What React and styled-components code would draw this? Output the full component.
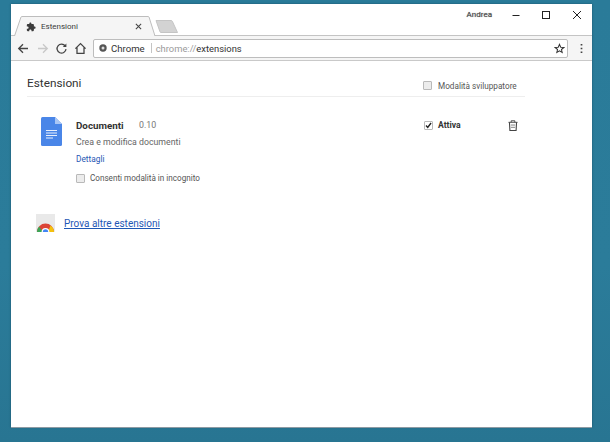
import React from "react";
import styled, { createGlobalStyle } from "styled-components";

const Global = createGlobalStyle`
  html, body { margin: 0; padding: 0; width: 610px; height: 442px; overflow: hidden; }
  body { background: linear-gradient(180deg, #2a7b99 0%, #2b7c9a 60%, #287592 100%); font-family: Roboto, "Open Sans", sans-serif; }
`;

const Desktop = styled.div`
  width: 610px;
  height: 442px;
  padding: 4px 18px 15px 11px;
  box-sizing: border-box;
  display: flex;
`;
const Win = styled.div`
  flex: 1;
  background: #fff;
  display: flex;
  flex-direction: column;
  box-shadow: 0 1px 0 #8d9aa3, 0 0 2px rgba(20, 50, 70, 0.55);
`;
const Strip = styled.div`
  height: 32px;
  display: flex;
  align-items: flex-end;
  position: relative;
  padding-left: 3px;
  border-bottom: 1px solid #c4c4c4;
  box-sizing: border-box;
`;
const Tab = styled.div`
  position: relative;
  width: 142px;
  height: 20px;
  margin-bottom: -1px;
  display: flex;
  align-items: center;
  padding: 1px 14px 0 12px;
  box-sizing: border-box;
  font-size: 8px;
  color: #3a3a3a;
  gap: 5px;
  z-index: 1;
`;
const TabShape = styled.svg`
  position: absolute;
  inset: 0;
`;
const TabIcon = styled.svg`
  position: relative;
  flex: none;
`;
const TabTitle = styled.span`
  flex: 1;
  position: relative;
`;
const NewTab = styled.svg`
  margin: 0 0 2px -1px;
`;
const Caption = styled.div`
  position: absolute;
  right: 0;
  top: 0;
  height: 20px;
  display: flex;
  align-items: center;
`;
const User = styled.span`
  font-size: 8px;
  color: #444;
  margin-right: 7px;
  text-shadow: 0 0 1px #888;
`;
const CaptionBtn = styled.svg`
  width: 31px;
  height: 20px;
`;
const Toolbar = styled.div`
  height: 25px;
  background: #f5f5f5;
  border-bottom: 1px solid #c9c9c9;
  display: flex;
  align-items: center;
  padding-left: 3px;
  box-sizing: border-box;
`;
const NavIcon = styled.svg`
  width: 19px;
  height: 19px;
  flex: none;
`;
const Omni = styled.div`
  width: 475px;
  height: 19px;
  margin-left: 3px;
  background: #fff;
  border: 1px solid #bdbdbd;
  border-radius: 2px;
  box-sizing: border-box;
  display: flex;
  align-items: center;
  padding: 0 2px 0 5px;
  font-size: 9.6px;
  color: #333;
`;
const OmniIcon = styled.svg`
  margin-right: 4px;
  flex: none;
`;
const Sep = styled.span`
  width: 1px;
  height: 10px;
  background: #c4c4c4;
  margin: 0 4px 0 6px;
`;
const Scheme = styled.span`
  color: #9a9a9a;
`;
const Url = styled.span`
  flex: 1;
  font-size: 9.4px;
`;
const MenuIcon = styled(NavIcon)`
  margin-left: 4px;
`;
const Main = styled.div`
  width: 498px;
  margin-left: 16px;
  display: flex;
  flex-direction: column;
`;
const Header = styled.div`
  height: 36px;
  display: flex;
  align-items: center;
  justify-content: space-between;
  border-bottom: 1px solid #eeeeee;
  box-sizing: border-box;
`;
const Title = styled.h1`
  margin: 8px 0 0;
  font-size: 11.8px;
  font-weight: 400;
  color: #333;
`;
const DevMode = styled.label`
  display: flex;
  align-items: center;
  gap: 6px;
  font-size: 8.2px;
  color: #555;
  width: 102px;
  margin-top: 14px;
  white-space: nowrap;
`;
const Box = styled.span`
  width: 9px;
  height: 9px;
  box-sizing: border-box;
  flex: none;
  border: 1px solid #b9b9b9;
  background: ${p => (p.$checked ? "#fff" : "#ececec")};
  border-radius: 1px;
  display: flex;
  align-items: center;
  justify-content: center;
`;
const ExtRow = styled.div`
  display: flex;
  padding: 20px 0 0 14px;
`;
const DocIcon = styled.svg`
  width: 21px;
  height: 29px;
  flex: none;
  margin-right: 14px;
`;
const ExtBody = styled.div`
  flex: 1;
  display: flex;
  flex-direction: column;
  padding-top: 1px;
`;
const NameLine = styled.div`
  display: flex;
  height: 14px;
  align-items: center;
  font-size: 9.8px;
  color: #333;
`;
const Name = styled.span`
  font-weight: 700;
  width: 63px;
`;
const Version = styled.span`
  color: #777;
  font-size: 8.8px;
`;
const Desc = styled.div`
  margin-top: 3px;
  height: 14px;
  line-height: 14px;
  font-size: 8.75px;
  color: #666;
`;
const Details = styled.a`
  margin-top: 3px;
  height: 14px;
  line-height: 14px;
  font-size: 8.3px;
  color: #1f57b5;
`;
const Incognito = styled.label`
  margin-top: 7px;
  display: flex;
  align-items: center;
  gap: 5px;
  font-size: 8.15px;
  color: #555;
`;
const Controls = styled.div`
  width: 101px;
  display: flex;
  align-items: center;
  height: 14px;
  margin-top: 1px;
`;
const Active = styled.label`
  display: flex;
  align-items: center;
  gap: 5px;
  flex: 1;
  font-size: 8.6px;
  font-weight: 700;
  color: #333;
`;
const Trash = styled.svg`
  width: 10px;
  height: 11px;
  margin: 0 7px 0 0;
`;
const MoreRow = styled.div`
  display: flex;
  align-items: center;
  gap: 9px;
  margin: 31px 0 0 9px;
`;
const ChromeLogo = styled.svg`
  flex: none;
`;
const MoreLink = styled.a`
  font-size: 10px;
  color: #1f57b5;
  text-decoration: underline;
`;

const Check = () => (
  <svg width="9" height="9" viewBox="0 0 9 9">
    <path d="M1.3 4.6 L3.5 7 L7.8 1.3" fill="none" stroke="#222" strokeWidth="1.8" />
  </svg>
);

export default function App() {
  return (
    <>
      <Global />
      <Desktop>
        <Win>
          <Strip>
            <Tab>
              <TabShape width="142" height="20" viewBox="0 0 142 20">
                <path d="M0.5 20 L7 1 Q7.3 0.5 8 0.5 L134 0.5 Q134.8 0.5 135 1 L141 20" fill="#f5f5f5" stroke="#bdbdbd" />
              </TabShape>
              <TabIcon width="10" height="10" viewBox="0 0 24 24">
                <path d="M20.5 11H19V7c0-1.1-.9-2-2-2h-4V3.5C13 2.12 11.88 1 10.5 1S8 2.12 8 3.5V5H4c-1.1 0-2 .9-2 2v3.8h1.5c1.49 0 2.7 1.21 2.7 2.7S4.99 16.2 3.5 16.2H2V20c0 1.1.9 2 2 2h3.8v-1.5c0-1.49 1.21-2.7 2.7-2.7s2.7 1.21 2.7 2.7V22H17c1.1 0 2-.9 2-2v-4h1.5c1.38 0 2.5-1.12 2.5-2.5S21.88 11 20.5 11z" fill="#3c3c3c" />
              </TabIcon>
              <TabTitle>Estensioni</TabTitle>
              <TabIcon width="7" height="7" viewBox="0 0 8 8">
                <path d="M1 1 L7 7 M7 1 L1 7" stroke="#444" strokeWidth="1.2" />
              </TabIcon>
            </Tab>
            <NewTab width="24" height="13" viewBox="0 0 24 13">
              <path d="M1 0.5 L16 0.5 Q17 0.5 17.3 1.2 L22.5 12.5 L6 12.5 Q5.2 12.5 5 11.8 Z" fill="#d3d3d3" stroke="#c4c4c4" />
            </NewTab>
            <Caption>
              <User>Andrea</User>
              <CaptionBtn viewBox="0 0 31 20">
                <path d="M13.5 11.5 H20.5" stroke="#222" strokeWidth="1" />
              </CaptionBtn>
              <CaptionBtn viewBox="0 0 31 20">
                <rect x="12.5" y="7.5" width="7" height="7" fill="none" stroke="#222" />
              </CaptionBtn>
              <CaptionBtn viewBox="0 0 31 20">
                <path d="M12 7 L20 15 M20 7 L12 15" stroke="#222" strokeWidth="1" />
              </CaptionBtn>
            </Caption>
          </Strip>
          <Toolbar>
            <NavIcon viewBox="0 0 19 19">
              <path d="M14 9.5 H5 M9 5.2 L4.7 9.5 L9 13.8" fill="none" stroke="#444" strokeWidth="1.3" />
            </NavIcon>
            <NavIcon viewBox="0 0 19 19">
              <path d="M5 9.5 H14 M10 5.2 L14.3 9.5 L10 13.8" fill="none" stroke="#c8c8c8" strokeWidth="1.3" />
            </NavIcon>
            <NavIcon viewBox="0 0 19 19">
              <path d="M13.2 7 A4.5 4.5 0 1 0 14 10.2" fill="none" stroke="#444" strokeWidth="1.3" />
              <path d="M14.4 4.4 V8 H10.8 Z" fill="#444" />
            </NavIcon>
            <NavIcon viewBox="0 0 19 19">
              <path d="M4.4 9.6 L9.5 4.6 L14.6 9.6 M6 8.4 V14.4 H13 V8.4" fill="none" stroke="#444" strokeWidth="1.3" />
            </NavIcon>
            <Omni>
              <OmniIcon width="8" height="8" viewBox="0 0 8 8">
                <circle cx="4" cy="4" r="3.7" fill="#555" />
                <circle cx="4" cy="4" r="1.5" fill="#ddd" />
              </OmniIcon>
              Chrome
              <Sep />
              <Url><Scheme>chrome://</Scheme>extensions</Url>
              <svg width="11" height="11" viewBox="0 0 24 24">
                <path d="M12 3 L14.7 9.2 L21.4 9.8 L16.3 14.2 L17.9 20.8 L12 17.3 L6.1 20.8 L7.7 14.2 L2.6 9.8 L9.3 9.2 Z" fill="none" stroke="#333" strokeWidth="2.2" />
              </svg>
            </Omni>
            <MenuIcon viewBox="0 0 19 19">
              <path d="M9.5 5 V6.6 M9.5 8.7 V10.3 M9.5 12.4 V14" stroke="#444" strokeWidth="1.7" />
            </MenuIcon>
          </Toolbar>
          <Main>
            <Header>
              <Title>Estensioni</Title>
              <DevMode><Box />Modalità sviluppatore</DevMode>
            </Header>
            <ExtRow>
              <DocIcon viewBox="0 0 21 29">
                <path d="M1.5 0 H14 L21 7 V27.5 Q21 29 19.5 29 H1.5 Q0 29 0 27.5 V1.5 Q0 0 1.5 0 Z" fill="#4a86e8" />
                <path d="M14 0 L21 7 H14 Z" fill="#a9c6f5" />
                <path d="M5 13.5 H16 M5 16 H16 M5 18.5 H16 M5 21 H12" stroke="#e8f0fd" strokeWidth="1" />
              </DocIcon>
              <ExtBody>
                <NameLine><Name>Documenti</Name><Version>0.10</Version></NameLine>
                <Desc>Crea e modifica documenti</Desc>
                <Details>Dettagli</Details>
                <Incognito><Box />Consenti modalità in incognito</Incognito>
              </ExtBody>
              <Controls>
                <Active><Box $checked><Check /></Box>Attiva</Active>
                <Trash viewBox="0 0 11 12">
                  <path d="M0.5 2.5 H10.5 M3.5 2.5 V0.8 H7.5 V2.5" fill="none" stroke="#444" strokeWidth="1" />
                  <path d="M1.6 2.5 L2.1 11.5 H8.9 L9.4 2.5" fill="none" stroke="#444" strokeWidth="1.2" />
                  <path d="M3.2 5.5 H7.8 M3.2 8 H7.8" stroke="#777" strokeWidth="1" />
                </Trash>
              </Controls>
            </ExtRow>
            <MoreRow>
              <ChromeLogo width="19" height="18" viewBox="0 0 19 18">
                <rect width="19" height="18" fill="#e9e9e9" />
                <path d="M1 18 A8.5 8.5 0 0 1 18 18 Z" fill="#db4437" />
                <path d="M1 18 A8.5 8.5 0 0 1 3 12.5 L7 18 Z" fill="#3aa757" />
                <path d="M12 18 L14.5 11.5 A8.5 8.5 0 0 1 18 18 Z" fill="#f4c20d" />
                <path d="M5.6 18 A3.9 3.9 0 0 1 13.4 18 Z" fill="#fff" />
                <path d="M6.8 18 A2.7 2.7 0 0 1 12.2 18 Z" fill="#4285f4" />
              </ChromeLogo>
              <MoreLink>Prova altre estensioni</MoreLink>
            </MoreRow>
          </Main>
        </Win>
      </Desktop>
    </>
  );
}
